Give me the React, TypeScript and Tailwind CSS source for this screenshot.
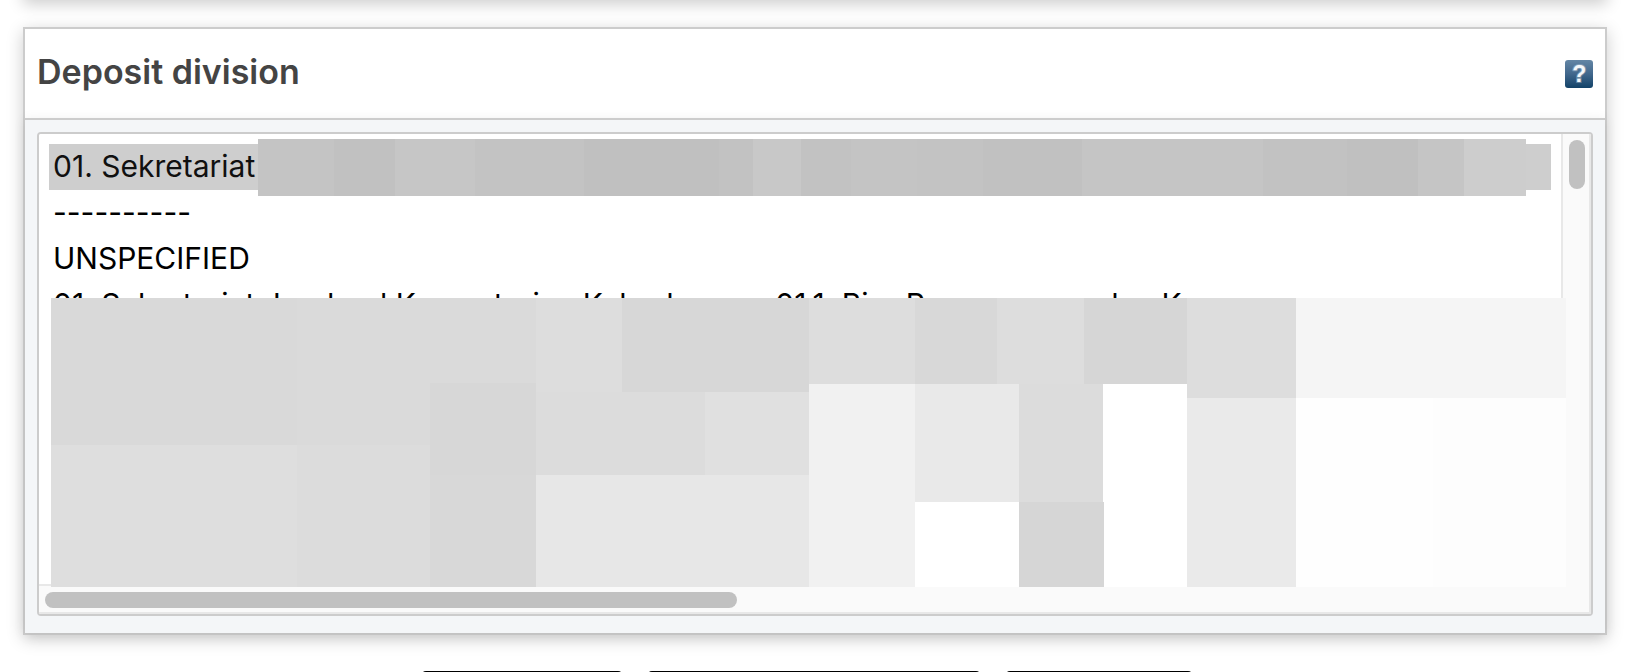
import React from "react";

const divisions = [
  "01. Sekretariat",
  "----------",
  "UNSPECIFIED",
  "01. Sekretariat Jenderal Kementerian Kebudayaan, 01.1. Biro Perencanaan dan Keuangan",
];

function HelpButton() {
  return (
    <button type="button" aria-label="Help" className="size-7 shrink-0 cursor-pointer">
      <svg viewBox="0 0 28 28" className="block size-7" aria-hidden="true">
        <defs>
          <linearGradient id="help-fill" x1="0" y1="0" x2="0" y2="1">
            <stop offset="0" stopColor="#6486a5" />
            <stop offset="0.5" stopColor="#41678c" />
            <stop offset="1" stopColor="#124268" />
          </linearGradient>
        </defs>
        <rect width="28" height="28" rx="3" fill="url(#help-fill)" />
        <text
          x="14.3"
          y="21.8"
          textAnchor="middle"
          fontFamily="Liberation Sans, sans-serif"
          fontWeight="700"
          fontSize="23"
          fill="#f4f7fa"
          stroke="#c4d3e0"
          strokeOpacity="0.4"
          strokeWidth="2"
          paintOrder="stroke"
        >
          ?
        </text>
      </svg>
    </button>
  );
}

function SelectedRowMask() {
  return (
    <div
      aria-hidden="true"
      className="pointer-events-none absolute top-[5px] right-[65px] left-[219px] grid h-[57px] grid-cols-[76fr_61fr_80fr_109fr_135fr_34fr_48fr_50fr_66fr_66fr_99fr_181fr_84fr_71fr_46fr_62fr]"
    >
      <div className="bg-[#c4c4c4]" />
      <div className="bg-[#c1c1c1]" />
      <div className="bg-[#c6c6c6]" />
      <div className="bg-[#c3c3c3]" />
      <div className="bg-[#c0c0c0]" />
      <div className="bg-[#c2c2c2]" />
      <div className="bg-[#c8c8c8]" />
      <div className="bg-[#c2c2c2]" />
      <div className="bg-[#c4c4c4]" />
      <div className="bg-[#c3c3c3]" />
      <div className="bg-[#c1c1c1]" />
      <div className="bg-[#c5c5c5]" />
      <div className="bg-[#c2c2c2]" />
      <div className="bg-[#c0c0c0]" />
      <div className="bg-[#c5c5c5]" />
      <div className="bg-[#cdcdcd]" />
    </div>
  );
}

function ListMask() {
  return (
    <div
      aria-hidden="true"
      className="pointer-events-none absolute top-[164px] right-[25px] left-3 grid h-[289px] grid-cols-[246fr_133fr_106fr_273fr_106fr_272fr_109fr_137fr_133fr]"
    >
      <div className="grid grid-rows-[147fr_142fr]">
        <div className="bg-[#d9d9d9]" />
        <div className="bg-[#dedede]" />
      </div>
      <div className="grid grid-rows-[147fr_142fr]">
        <div className="bg-[#dadada]" />
        <div className="bg-[#dcdcdc]" />
      </div>
      <div className="grid grid-rows-[85fr_92fr_112fr]">
        <div className="bg-[#dadada]" />
        <div className="bg-[#d7d7d7]" />
        <div className="bg-[#d8d8d8]" />
      </div>
      <div className="grid grid-rows-[94fr_83fr_112fr]">
        <div className="grid grid-cols-[86fr_187fr]">
          <div className="bg-[#dddddd]" />
          <div className="bg-[#d7d7d7]" />
        </div>
        <div className="grid grid-cols-[169fr_104fr]">
          <div className="bg-[#dcdcdc]" />
          <div className="bg-[#e0e0e0]" />
        </div>
        <div className="bg-[#e7e7e7]" />
      </div>
      <div className="grid grid-rows-[86fr_203fr]">
        <div className="bg-[#dddddd]" />
        <div className="bg-[#f1f1f1]" />
      </div>
      <div className="grid grid-rows-[86fr_118fr_85fr]">
        <div className="grid grid-cols-[82fr_87fr_103fr]">
          <div className="bg-[#d8d8d8]" />
          <div className="bg-[#dddddd]" />
          <div className="bg-[#d6d6d6]" />
        </div>
        <div className="grid grid-cols-[104fr_84fr_84fr]">
          <div className="bg-[#e9e9e9]" />
          <div className="bg-[#dcdcdc]" />
          <div className="bg-white" />
        </div>
        <div className="grid grid-cols-[104fr_85fr_83fr]">
          <div className="bg-white" />
          <div className="bg-[#d6d6d6]" />
          <div className="bg-white" />
        </div>
      </div>
      <div className="grid grid-rows-[100fr_189fr]">
        <div className="bg-[#dddddd]" />
        <div className="bg-[#eaeaea]" />
      </div>
      <div className="grid grid-rows-[100fr_189fr]">
        <div className="bg-[#f5f5f5]" />
        <div className="bg-[#fefefe]" />
      </div>
      <div className="grid grid-rows-[100fr_189fr]">
        <div className="bg-[#f5f5f5]" />
        <div className="bg-[#fdfdfd]" />
      </div>
    </div>
  );
}

function DivisionList() {
  return (
    <div className="relative grid grid-cols-[minmax(0,1fr)_30px] grid-rows-[450px_30px] overflow-hidden rounded border-2 border-[#cccccc] bg-white">
      <select
        id="divisions"
        multiple
        size={9}
        defaultValue={["01. Sekretariat"]}
        className="h-full w-full appearance-none overflow-hidden rounded-none border-0 bg-white px-2.5 py-2.5 font-['Inter',sans-serif] text-[30px] text-black outline-none [scrollbar-width:none]"
      >
        {divisions.map((name) => (
          <option
            key={name}
            value={name}
            className="block h-[46px] min-h-0 px-1 pt-1 pb-0 checked:bg-[#cecece] checked:bg-[linear-gradient(#cecece,#cecece)]"
          >
            {name}
          </option>
        ))}
      </select>
      <div className="border-x-2 border-[#e8e8e8] bg-[#fafafa] px-1.5 pt-1.5">
        <div className="h-[49px] w-4 rounded-full bg-[#c1c1c1]" />
      </div>
      <div className="border-y-2 border-[#e8e8e8] bg-[#fafafa] px-1.5 pt-1.5">
        <div className="h-4 w-[45.8%] rounded-full bg-[#c1c1c1]" />
      </div>
      <div className="border-r-2 border-b-2 border-[#e8e8e8] bg-[#fafafa]" />
      <SelectedRowMask />
      <ListMask />
    </div>
  );
}

export default function App() {
  return (
    <main className="bg-white pr-[21px] pl-[23px] font-['Inter',sans-serif]">
      <div className="-mt-10 h-10 shadow-[0_4px_16px_rgba(0,0,0,0.2)]" />

      <section className="mt-[27px] border-2 border-[#cccccc] bg-white shadow-[0_4px_16px_rgba(0,0,0,0.2)]">
        <header className="flex h-[89px] items-center justify-between px-3">
          <h2 className="pb-1 text-[34px] leading-10 font-semibold text-[#444444]">
            <label htmlFor="divisions">Deposit division</label>
          </h2>
          <HelpButton />
        </header>
        <div className="border-t-2 border-[#cccccc] bg-[#f4f6f8] px-3 pt-3 pb-[17px] shadow-[0_2px_12px_rgba(0,0,0,0.08)]">
          <DivisionList />
        </div>
      </section>

      <div className="mt-9 flex h-px justify-center gap-[26px] overflow-hidden pr-4">
        <button type="button" aria-label="Previous" className="h-14 w-[200px] shrink-0 rounded bg-black" />
        <button type="button" aria-label="Save for later" className="h-14 w-[332px] shrink-0 rounded bg-black" />
        <button type="button" aria-label="Next" className="h-14 w-[186px] shrink-0 rounded bg-black" />
      </div>
    </main>
  );
}
